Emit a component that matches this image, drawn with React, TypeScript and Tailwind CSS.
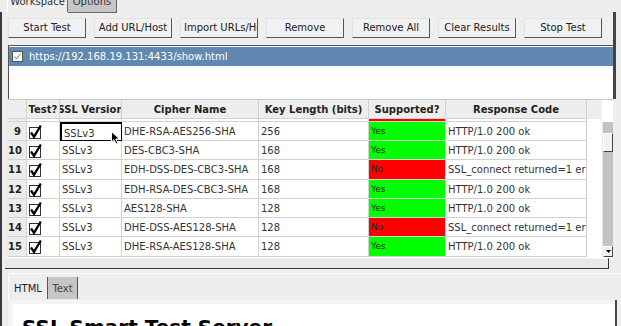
import React from 'react';

type Row = { n: number; cipher: string; bits: string; ok: boolean; resp: string };

const ERR = 'SSL_connect returned=1 errno=0 state=SSLv3 read server hello A';

const rows: Row[] = [
  { n: 8, cipher: 'EDH-DSS-AES256-SHA', bits: '256', ok: false, resp: ERR },
  { n: 9, cipher: 'DHE-RSA-AES256-SHA', bits: '256', ok: true, resp: 'HTTP/1.0 200 ok' },
  { n: 10, cipher: 'DES-CBC3-SHA', bits: '168', ok: true, resp: 'HTTP/1.0 200 ok' },
  { n: 11, cipher: 'EDH-DSS-DES-CBC3-SHA', bits: '168', ok: false, resp: ERR },
  { n: 12, cipher: 'EDH-RSA-DES-CBC3-SHA', bits: '168', ok: true, resp: 'HTTP/1.0 200 ok' },
  { n: 13, cipher: 'AES128-SHA', bits: '128', ok: true, resp: 'HTTP/1.0 200 ok' },
  { n: 14, cipher: 'DHE-DSS-AES128-SHA', bits: '128', ok: false, resp: ERR },
  { n: 15, cipher: 'DHE-RSA-AES128-SHA', bits: '128', ok: true, resp: 'HTTP/1.0 200 ok' },
];

const buttons = ['Start Test', 'Add URL/Host', 'Import URLs/Host', 'Remove', 'Remove All', 'Clear Results', 'Stop Test'];

function Check() {
  return (
    <svg width="13" height="15" viewBox="0 0 13 15" className="block">
      <rect x="0.5" y="3.5" width="11" height="11" fill="#fff" stroke="#333" />
      <path d="M2 8.5 L5 12.8 L11.8 1.5" fill="none" stroke="#000" strokeWidth="2.3" />
    </svg>
  );
}

function Btn({ label }: { label: string }) {
  return (
    <div className="w-[78px] h-[20px] shrink-0 bg-[#f1f1f1] border border-t-[#e2e2e2] border-l-[#e2e2e2] border-r-[#555] border-b-[#555] px-[3px] overflow-hidden whitespace-nowrap text-center leading-[18px] text-[#222]">
      {label}
    </div>
  );
}

function Cell({ w, children, className = '' }: { w: string; children?: React.ReactNode; className?: string }) {
  return (
    <div className={`${w} shrink-0 h-full border-r border-b border-[#d2d2d2] overflow-hidden whitespace-nowrap ${className}`}>
      {children}
    </div>
  );
}

export default function App() {
  return (
    <div className="relative w-[621px] h-[326px] overflow-hidden bg-[#eeeeee] font-['DejaVu_Sans',sans-serif] text-[10px] text-[#222]">
      {/* top tabs, cut off by the window edge */}
      <div className="flex h-[12px] pl-[7px]">
        <div className="w-[61px] h-full border-l border-white border-r border-r-[#666] text-center leading-[12px] text-[#333] overflow-hidden">
          <div className="-mt-[4px]">Workspace</div>
        </div>
        <div className="w-[49px] h-[13px] bg-[#c6c6c6] border-r border-b border-[#666] text-center leading-[12px] text-[#333] overflow-hidden">
          <div className="-mt-[4px]">Options</div>
        </div>
      </div>

      <div className="h-[314px] border-l-2 border-[#3a3a3a] flex flex-col">
        {/* buttons + url list */}
        <div className="shrink-0 w-[614px] pl-[6px] pt-[6px] border-r-[3px] border-[#444]">
          <div className="flex gap-2">
            {buttons.map((b) => (
              <Btn key={b} label={b} />
            ))}
          </div>
          <div className="mt-[7px] h-[54px] bg-white border-t border-l border-[#555] pt-px">
            <div className="h-[19px] bg-[#6088b1] flex items-center pl-[3px] gap-[6px] text-white">
              <svg width="11" height="11" viewBox="0 0 11 11" className="block">
                <rect x="0.5" y="0.5" width="10" height="10" fill="#fff" stroke="#555" />
                <path d="M2.5 5.5 L4.5 8 L8.5 2.5" fill="none" stroke="#777" strokeWidth="1" />
              </svg>
              <span>https://192.168.19.131:4433/show.html</span>
            </div>
          </div>
        </div>

        {/* table */}
        <div className="shrink-0 ml-[6px] w-[605px] h-[159px] flex flex-col bg-white">
          <div className="shrink-0 h-[20px] flex border-t border-[#c8c8c8] bg-[#eeeeee] font-bold text-[#222]">
            <Cell w="w-[19px]" className="border-[#c0c0c0]" />
            {[
              ['w-[33px]', 'Test?'],
              ['w-[62px]', 'SSL Version'],
              ['w-[137px]', 'Cipher Name'],
              ['w-[110px]', 'Key Length (bits)'],
              ['w-[77px]', 'Supported?'],
              ['w-[141px]', 'Response Code'],
            ].map(([w, t]) => (
              <Cell key={t} w={w} className="flex justify-center items-center border-[#c0c0c0]">
                {t}
              </Cell>
            ))}
            <div className="w-[15px] h-full" />
            <div className="w-[11px] h-full bg-white" />
          </div>

          <div className="flex-1 min-h-0 flex overflow-hidden">
            <div className="w-[594px] shrink-0 overflow-hidden">
              <div className="-mt-[16.6px]">
                {rows.map((r) => (
                  <div key={r.n} className="h-[19.3px] flex text-[#333]">
                    <Cell w="w-[19px]" className="bg-[#ececec] border-[#c8c8c8] text-right pr-[5px] font-bold text-[#222] leading-[19px]">
                      {r.n}
                    </Cell>
                    <Cell w="w-[33px]" className="pl-[2px] pt-[2px]">
                      <Check />
                    </Cell>
                    <Cell w="w-[62px]" className={`pl-[2px] leading-[19px] ${r.n === 9 ? 'border-2 border-black pl-[0px] leading-[15px]' : ''}`}>
                      SSLv3
                    </Cell>
                    <Cell w="w-[137px]" className="pl-[2px] leading-[19px]">{r.cipher}</Cell>
                    <Cell w="w-[110px]" className="pl-[2px] leading-[19px]">{r.bits}</Cell>
                    <Cell w="w-[77px]" className={`pl-[2px] leading-[19px] text-[9px] text-[#222] ${r.ok ? 'bg-[#00ff00]' : 'bg-[#ff0000]'}`}>
                      {r.ok ? 'Yes' : 'No'}
                    </Cell>
                    <Cell w="w-[141px]" className="pl-[2px] leading-[19px]">{r.resp}</Cell>
                  </div>
                ))}
              </div>
            </div>
            {/* vertical scrollbar */}
            <div className="w-[11px] mt-[3px] h-[135px] flex flex-col bg-[#c2c2c2] border-l border-[#e6e6e6]">
              <div className="mt-[11px] h-[19px] bg-[#f2f2f2] border border-t-white border-l-white border-r-[#444] border-b-[#444]" />
              <div className="flex-1" />
              <div className="h-[11px] bg-[#efefef] border border-t-white border-l-white border-r-[#444] border-b-[#444] flex items-center justify-center">
                <svg width="5" height="3" viewBox="0 0 5 3" className="block">
                  <path d="M0 0 H5 L2.5 3 Z" fill="#000" />
                </svg>
              </div>
            </div>
          </div>
        </div>

        {/* strip below table */}
        <div className="shrink-0 ml-[3px] w-[604px] h-[11px] bg-[#e9e9e9] border-t border-t-[#f6f6f6] border-b border-b-[#333] border-r border-r-[#333]" />

        {/* lower tabs */}
        <div className="mt-[4px] ml-[6px] border-t border-white pt-[2px] flex flex-col flex-1 min-h-0 overflow-hidden">
          <div className="shrink-0 flex h-[24px]">
            <div className="w-[39px] h-full bg-[#eeeeee] border-l border-white flex items-center justify-center text-[#222]">
              HTML
            </div>
            <div className="w-[31px] h-[22px] mt-[1px] bg-[#c6c6c6] border-l border-r border-[#555] flex items-center justify-center text-[#444]">
              Text
            </div>
          </div>
          <div className="w-[609px] flex-1 min-h-0 bg-[#f4f4f4] pl-[5px] pt-[4px] border-r-2 border-[#444] overflow-hidden">
            <div className="h-[60px] bg-white pl-[9px] pt-[8px]">
              <div className="font-bold text-[20px] text-black whitespace-nowrap leading-normal">SSL Smart Test Server</div>
            </div>
          </div>
        </div>
      </div>

      {/* mouse pointer over the table */}
      <svg width="10" height="14" viewBox="0 0 10 14" className="absolute left-[111px] top-[131px]">
        <path d="M0.5 0.5 L0.5 11 L3 8.7 L5 13 L6.8 12.2 L4.9 8 L8.5 8 Z" fill="#000" stroke="#fff" strokeWidth="1" />
      </svg>
    </div>
  );
}
